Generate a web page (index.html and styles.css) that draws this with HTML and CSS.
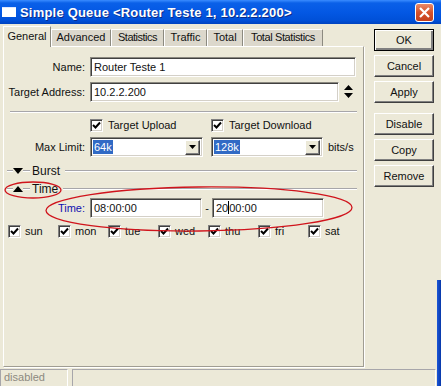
FILE: index.html
```html
<!DOCTYPE html>
<html lang="en">
<head>
  <meta charset="UTF-8" />
  <title>Simple Queue &lt;Router Teste 1, 10.2.2.200&gt;</title>
  <link rel="stylesheet" href="styles.css">
</head>
<body>
<div class="window">
  <div class="titlebar">
    <span class="app-icon"></span>
    <span class="title">Simple Queue &lt;Router Teste 1, 10.2.2.200&gt;</span>
    <span class="close">
      <svg width="13" height="13" viewBox="0 0 13 13"><path d="M2 2 L11 11 M11 2 L2 11" stroke="#fff" stroke-width="2.2"/></svg>
    </span>
  </div>

  <div class="main">
    <div class="left">
      <div class="tabs">
        <div class="tab active tab-general">General</div>
        <div class="tab tab-advanced">Advanced</div>
        <div class="tab tab-stats">Statistics</div>
        <div class="tab tab-traffic">Traffic</div>
        <div class="tab tab-total">Total</div>
        <div class="tab tab-totalstats">Total Statistics</div>
      </div>

      <div class="panel">
        <div class="row">
          <label class="lbl">Name:</label>
          <div class="field name-field">Router Teste 1</div>
        </div>

        <div class="row row-addr">
          <label class="lbl">Target Address:</label>
          <div class="field addr-field">10.2.2.200</div>
          <svg class="spinner" width="9" height="14" viewBox="0 0 9 14">
            <path d="M4.5 0 L9 5 L0 5 Z M0 8 L9 8 L4.5 13 Z" fill="#000"/>
          </svg>
        </div>

        <div class="separator"></div>

        <div class="row row-checks">
          <div class="check-group">
            <span class="checkbox"><svg width="9" height="9" viewBox="0 0 9 9"><path d="M1 4 L3.5 6.5 L8 1.5" stroke="#000" stroke-width="2" fill="none"/></svg></span>
            <span>Target Upload</span>
          </div>
          <div class="check-group">
            <span class="checkbox"><svg width="9" height="9" viewBox="0 0 9 9"><path d="M1 4 L3.5 6.5 L8 1.5" stroke="#000" stroke-width="2" fill="none"/></svg></span>
            <span>Target Download</span>
          </div>
        </div>

        <div class="row row-limit">
          <label class="lbl">Max Limit:</label>
          <div class="field combo"><span class="selected">64k</span>
            <span class="drop"><svg width="7" height="4" viewBox="0 0 7 4"><path d="M0 0 L7 0 L3.5 4 Z" fill="#000"/></svg></span>
          </div>
          <div class="field combo combo-2"><span class="selected">128k</span>
            <span class="drop"><svg width="7" height="4" viewBox="0 0 7 4"><path d="M0 0 L7 0 L3.5 4 Z" fill="#000"/></svg></span>
          </div>
          <span class="unit">bits/s</span>
        </div>

        <div class="section section-burst">
          <span class="rule rule-a"></span>
          <svg width="10" height="6" viewBox="0 0 10 6"><path d="M0 0 L10 0 L5 6 Z" fill="#000"/></svg>
          <span class="rule rule-b"></span>
          <span class="section-name">Burst</span>
          <span class="rule rule-fill"></span>
        </div>

        <div class="section section-time">
          <span class="rule rule-a"></span>
          <svg width="10" height="6" viewBox="0 0 10 6"><path d="M0 6 L10 6 L5 0 Z" fill="#000"/></svg>
          <span class="rule rule-b"></span>
          <span class="section-name">Time</span>
          <span class="rule rule-fill"></span>
        </div>

        <div class="row row-time">
          <label class="lbl lbl-blue">Time:</label>
          <div class="field time-field">08:00:00</div>
          <span class="dash">-</span>
          <div class="field time-field">20<span class="caret"></span>00:00</div>
        </div>

        <div class="days">
          <div class="day"><span class="checkbox"><svg width="9" height="9" viewBox="0 0 9 9"><path d="M1 4 L3.5 6.5 L8 1.5" stroke="#000" stroke-width="2" fill="none"/></svg></span><span>sun</span></div>
          <div class="day"><span class="checkbox"><svg width="9" height="9" viewBox="0 0 9 9"><path d="M1 4 L3.5 6.5 L8 1.5" stroke="#000" stroke-width="2" fill="none"/></svg></span><span>mon</span></div>
          <div class="day"><span class="checkbox"><svg width="9" height="9" viewBox="0 0 9 9"><path d="M1 4 L3.5 6.5 L8 1.5" stroke="#000" stroke-width="2" fill="none"/></svg></span><span>tue</span></div>
          <div class="day"><span class="checkbox"><svg width="9" height="9" viewBox="0 0 9 9"><path d="M1 4 L3.5 6.5 L8 1.5" stroke="#000" stroke-width="2" fill="none"/></svg></span><span>wed</span></div>
          <div class="day"><span class="checkbox"><svg width="9" height="9" viewBox="0 0 9 9"><path d="M1 4 L3.5 6.5 L8 1.5" stroke="#000" stroke-width="2" fill="none"/></svg></span><span>thu</span></div>
          <div class="day"><span class="checkbox"><svg width="9" height="9" viewBox="0 0 9 9"><path d="M1 4 L3.5 6.5 L8 1.5" stroke="#000" stroke-width="2" fill="none"/></svg></span><span>fri</span></div>
          <div class="day"><span class="checkbox"><svg width="9" height="9" viewBox="0 0 9 9"><path d="M1 4 L3.5 6.5 L8 1.5" stroke="#000" stroke-width="2" fill="none"/></svg></span><span>sat</span></div>
        </div>
      </div>
    </div>

    <div class="buttons">
      <button class="btn default">OK</button>
      <button class="btn">Cancel</button>
      <button class="btn">Apply</button>
      <button class="btn gap">Disable</button>
      <button class="btn">Copy</button>
      <button class="btn">Remove</button>
    </div>
  </div>

  <div class="statusbar">
    <div class="status-box status-state">disabled</div>
    <div class="status-box status-msg"></div>
  </div>

  <div class="edge"></div>

  <!-- red highlight marks drawn over the dialog -->
  <svg class="marks" width="441" height="386" viewBox="0 0 441 386">
    <ellipse cx="33" cy="190" rx="28" ry="8" fill="none" stroke="#d0141c" stroke-width="1.3"/>
    <ellipse cx="199" cy="209" rx="153" ry="22" fill="none" stroke="#d0141c" stroke-width="1.3" transform="rotate(-0.6 199 209)"/>
  </svg>
</div>
</body>
</html>
```

FILE: styles.css
```css
body {
  margin: 0;
  background: #ece9d8;
}
.window {
  position: relative;
  width: 441px;
  height: 386px;
  overflow: hidden;
  background: #ece9d8;
  font-family: "Liberation Sans", Arial, sans-serif;
  font-size: 11px;
  color: #111;
}

/* title bar */
.titlebar {
  height: 24px;
  display: flex;
  align-items: center;
  background: linear-gradient(#3a8cff 0, #0a60e8 3px, #0458e4 50%, #0050d8 85%, #0043c0 100%);
  color: #fff;
}
.app-icon {
  width: 14px;
  height: 9px;
  margin-left: 2px;
  margin-right: 4px;
  background: #fff;
  border-top: 1px solid #dfe8ff;
}
.title {
  font-weight: bold;
  font-size: 13px;
  letter-spacing: 0.2px;
  text-shadow: 1px 1px 0 #0a2c8a;
}
.close {
  margin-left: auto;
  margin-right: 7px;
  width: 17px;
  height: 17px;
  display: flex;
  align-items: center;
  justify-content: center;
  border: 1px solid #fff;
  border-radius: 3px;
  background: linear-gradient(#e98a6a, #d6522b 50%, #c4401d);
}

/* body */
.main {
  display: flex;
  height: 345px;
}
.left {
  width: 365px;
  padding-left: 3px;
  padding-top: 1px;
}
.tabs {
  display: flex;
  align-items: flex-end;
  height: 21px;
}
.tab {
  height: 16px;
  line-height: 15px;
  text-align: center;
  box-sizing: border-box;
  height: 17px;
  background: #dcd8cc;
  border-left: 1px solid #fff;
  border-top: 1px solid #fff;
  border-right: 1px solid #8c8a80;
}
.tab.active {
  height: 21px;
  line-height: 19px;
  background: #ece9d8;
  position: relative;
  top: 1px;
}
.tab-general { width: 48px; }
.tab-advanced { width: 60px; }
.tab-stats { width: 53px; letter-spacing: -0.5px; }
.tab-traffic { width: 43px; }
.tab-total { width: 36px; }
.tab-totalstats { width: 80px; letter-spacing: -0.4px; }

.panel {
  width: 359px;
  padding-top: 10px;
  height: 309px;
  border: 1px solid #a09d92;
  border-top-color: #fff;
  border-left-color: #fff;
  box-shadow: 1px 1px 0 #fff;
}

.row {
  display: flex;
  align-items: center;
  height: 20px;
}
.lbl {
  width: 81px;
  margin-right: 5px;
  text-align: right;
}
.lbl-blue {
  color: #1010b0;
}
.field {
  height: 20px;
  box-sizing: border-box;
  background: #fff;
  border-top: 1px solid #8a887f;
  border-left: 1px solid #8a887f;
  border-bottom: 1px solid #fff;
  border-right: 1px solid #fff;
  box-shadow: inset 1px 1px 0 #404040, inset -1px -1px 0 #d4d0c8;
  padding: 0 3px;
  line-height: 18px;
  white-space: nowrap;
}
.name-field {
  width: 266px;
}
.row-addr {
  margin-top: 5px;
}
.addr-field {
  width: 249px;
}
.spinner {
  margin-left: 5px;
}
.separator {
  margin: 9px 6px 0 6px;
  border-top: 1px solid #a7a6aa;
  border-bottom: 1px solid #fff;
}

.row-checks {
  margin-top: 5px;
  height: 14px;
  padding-left: 86px;
}
.check-group {
  display: flex;
  align-items: center;
  width: 121px;
}
.checkbox {
  width: 13px;
  height: 13px;
  box-sizing: border-box;
  display: inline-flex;
  align-items: center;
  justify-content: center;
  background: #fff;
  border-top: 1px solid #808080;
  border-left: 1px solid #808080;
  border-bottom: 1px solid #fff;
  border-right: 1px solid #fff;
  box-shadow: inset 1px 1px 0 #404040, inset -1px -1px 0 #d4d0c8;
  margin-right: 5px;
  flex-shrink: 0;
}

.row-limit {
  margin-top: 5px;
}
.combo {
  width: 113px;
  display: flex;
  align-items: center;
  padding: 0 2px 0 2px;
}
.combo-2 {
  margin-left: 8px;
  width: 112px;
}
.selected {
  background: #316ac5;
  color: #fff;
  line-height: 14px;
  padding: 0 1px;
}
.drop {
  margin-left: auto;
  width: 15px;
  height: 15px;
  display: flex;
  align-items: center;
  justify-content: center;
  background: #ece9d8;
  border-top: 1px solid #fff;
  border-left: 1px solid #fff;
  border-bottom: 1px solid #404040;
  border-right: 1px solid #404040;
  box-sizing: border-box;
  box-shadow: inset -1px -1px 0 #808080;
}
.unit {
  margin-left: 5px;
}

.section {
  display: flex;
  align-items: center;
  height: 14px;
  padding-left: 3px;
  padding-right: 6px;
}
.section-burst {
  margin-top: 7px;
}
.section-time {
  margin-top: 4px;
}
.rule {
  height: 0;
  border-top: 1px solid #a7a6aa;
  border-bottom: 1px solid #fff;
}
.rule-a {
  width: 6px;
}
.rule-b {
  width: 7px;
}
.rule-fill {
  flex: 1;
  margin-left: 5px;
}
.section-name {
  margin-left: 2px;
  font-size: 12px;
}

.row-time {
  margin-top: 2px;
}
.time-field {
  width: 112px;
}
.dash {
  width: 10px;
  text-align: center;
}
.caret {
  display: inline-block;
  width: 1px;
  height: 13px;
  background: #000;
  vertical-align: -2px;
}

.days {
  display: flex;
  margin-top: 6px;
  height: 14px;
  padding-left: 4px;
}
.day {
  display: flex;
  align-items: center;
  width: 50px;
}
.day .checkbox {
  margin-right: 4px;
}

/* right buttons */
.buttons {
  display: flex;
  flex-direction: column;
  gap: 4px;
  padding-top: 5px;
  margin-left: 6px;
}
.btn {
  width: 60px;
  height: 22px;
  padding: 0;
  font-family: "Liberation Sans", Arial, sans-serif;
  font-size: 11px;
  color: #111;
  background: #ece9d8;
  border-top: 1px solid #fff;
  border-left: 1px solid #fff;
  border-bottom: 1px solid #404040;
  border-right: 1px solid #404040;
  box-shadow: inset -1px -1px 0 #808080;
}
.btn.default {
  border: 1px solid #000;
  box-shadow: inset 1px 1px 0 #fff, inset -2px -2px 0 #808080;
}
.btn.gap {
  margin-top: 6px;
}

/* status bar */
.statusbar {
  display: flex;
  height: 17px;
  gap: 4px;
}
.status-box {
  box-sizing: border-box;
  height: 17px;
  border-top: 1px solid #a7a6aa;
  border-left: 1px solid #a7a6aa;
  border-right: 1px solid #fff;
  padding-left: 3px;
  line-height: 15px;
  color: #8c8a80;
}
.status-state {
  width: 68px;
}
.status-msg {
  width: 364px;
}

.edge {
  position: absolute;
  right: 0;
  top: 280px;
  bottom: 0;
  width: 4px;
  background: linear-gradient(90deg, #1a55d8, #0838a8);
}
.marks {
  position: absolute;
  left: 0;
  top: 0;
  pointer-events: none;
}
```
